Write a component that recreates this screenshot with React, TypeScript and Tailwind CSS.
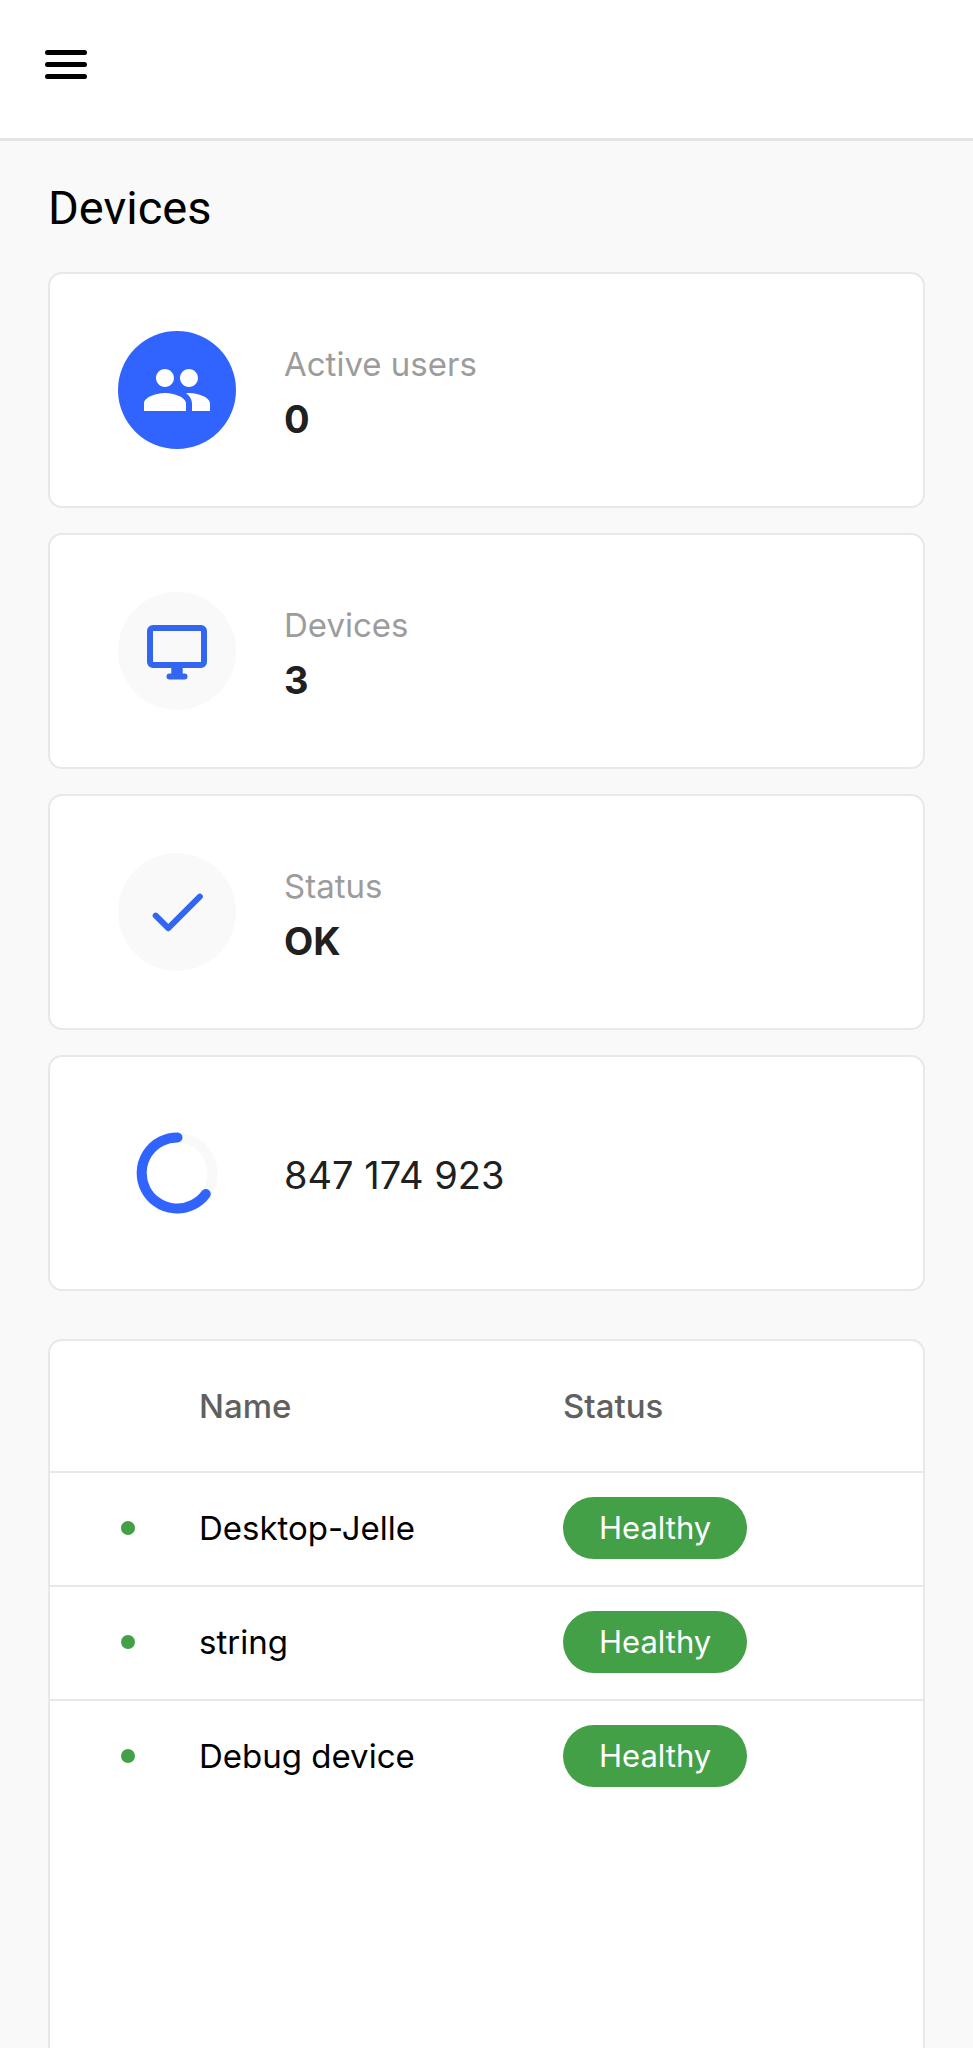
import type { ReactNode } from "react";

const devices = ["Desktop-Jelle", "string", "Debug device"];

function PeopleIcon() {
  return (
    <svg viewBox="0 0 24 24" className="size-[72px] fill-current" aria-hidden="true">
      <path d="M16 11c1.66 0 2.99-1.34 2.99-3S17.66 5 16 5c-1.66 0-3 1.34-3 3s1.34 3 3 3zm-8 0c1.66 0 2.99-1.34 2.99-3S9.66 5 8 5C6.34 5 5 6.34 5 8s1.34 3 3 3zm0 2c-2.33 0-7 1.17-7 3.5V19h14v-2.5c0-2.33-4.67-3.5-7-3.5zm8 0c-.29 0-.62.02-.97.05 1.16.84 1.97 1.97 1.97 3.45V19h6v-2.5c0-2.33-4.67-3.5-7-3.5z" />
    </svg>
  );
}

function MonitorIcon() {
  return (
    <svg viewBox="0 0 24 24" className="size-[72px]" fill="none" stroke="currentColor" strokeWidth="2" aria-hidden="true">
      <rect x="3" y="4.300" width="18" height="12.400" rx="1" />
      <path d="M12 17v3.200" strokeWidth="3.8" />
      <path d="M9.500 20.500h5" strokeLinecap="round" />
    </svg>
  );
}

function CheckIcon() {
  return (
    <svg
      viewBox="0 0 24 24"
      className="size-[72px]"
      fill="none"
      stroke="currentColor"
      strokeWidth="2"
      strokeLinecap="round"
      strokeLinejoin="round"
      aria-hidden="true"
    >
      <path d="M4.900 13.200l4.200 4.200L19.600 6.900" />
    </svg>
  );
}

function Card({ children }: { children: ReactNode }) {
  return (
    <section className="flex h-[236px] items-center gap-12 rounded-[14px] border-2 border-[#e8e8e8] bg-white px-[68px]">
      {children}
    </section>
  );
}

function Stat({ label, value, icon, active }: { label: string; value: string; icon: ReactNode; active?: boolean }) {
  return (
    <Card>
      <div
        className={`flex size-[118px] shrink-0 items-center justify-center rounded-full ${
          active ? "bg-[#3164ff] text-white" : "bg-[#f9f9f9] text-[#3366f0]"
        }`}
      >
        {icon}
      </div>
      <dl className="pt-1">
        <dt className="text-[33px] leading-[55px] text-[#9c9c9c]">{label}</dt>
        <dd className="text-[38px] leading-[55px] font-bold text-[#202020]">{value}</dd>
      </dl>
    </Card>
  );
}

export default function App() {
  return (
    <div className="flex min-h-screen flex-col bg-[#f9f9f9] font-['Inter',sans-serif] text-black">
      <header className="flex h-[141px] items-center border-b-[3px] border-[#e4e4e4] bg-white px-[45px] pb-[10px]">
        <button type="button" aria-label="Open menu" className="flex w-[42px] flex-col gap-[7px]">
          <span className="h-[5px] rounded-full bg-black" />
          <span className="h-[5px] rounded-full bg-black" />
          <span className="h-[5px] rounded-full bg-black" />
        </button>
      </header>

      <main className="flex grow flex-col px-12">
        <h1 className="pt-[41px] pb-[38px] font-['Roboto',sans-serif] text-[47px] leading-[52px]">Devices</h1>

        <div className="flex flex-col gap-[25px]">
          <Stat label="Active users" value="0" icon={<PeopleIcon />} active />
          <Stat label="Devices" value="3" icon={<MonitorIcon />} />
          <Stat label="Status" value="OK" icon={<CheckIcon />} />
          <Card>
            <div className="flex w-[118px] shrink-0 justify-center">
              <svg viewBox="0 0 82 82" className="size-[82px]" fill="none" strokeWidth="10" aria-hidden="true">
                <circle cx="41" cy="41" r="35.500" stroke="#f9f9f9" />
                <path d="M41.500 5.500A35.500 35.500 0 1 0 69.800 62" stroke="#3164ff" strokeLinecap="round" />
              </svg>
            </div>
            <p className="pt-1 text-[38px] leading-[55px] text-[#202020]">847 174 923</p>
          </Card>
        </div>

        <section className="mt-12 grow rounded-t-[14px] border-2 border-b-0 border-[#e8e8e8] bg-white">
          <table className="w-full table-fixed border-separate border-spacing-0 text-left text-[33px] leading-[54px]">
            <thead className="text-[#606060] *:*:border-b-2 *:*:border-[#e8e8e8]">
              <tr className="h-[132px]">
                <td className="w-[149px]" />
                <th scope="col" className="w-[364px] font-medium">Name</th>
                <th scope="col" className="font-medium">Status</th>
              </tr>
            </thead>
            <tbody className="*:*:border-b-2 *:*:border-[#e8e8e8] *:*:pb-[2px] *:last:*:border-b-0">
              {devices.map((name) => (
                <tr key={name} className="h-[114px] last:h-[112px]">
                  <td className="pl-[71px]">
                    <span className="block size-[14px] rounded-full bg-[#43a047]" />
                  </td>
                  <td>{name}</td>
                  <td>
                    <span className="flex h-[62px] w-fit items-center rounded-full bg-[#43a047] px-9 text-[31px] text-white">
                      Healthy
                    </span>
                  </td>
                </tr>
              ))}
            </tbody>
          </table>
        </section>
      </main>
    </div>
  );
}
